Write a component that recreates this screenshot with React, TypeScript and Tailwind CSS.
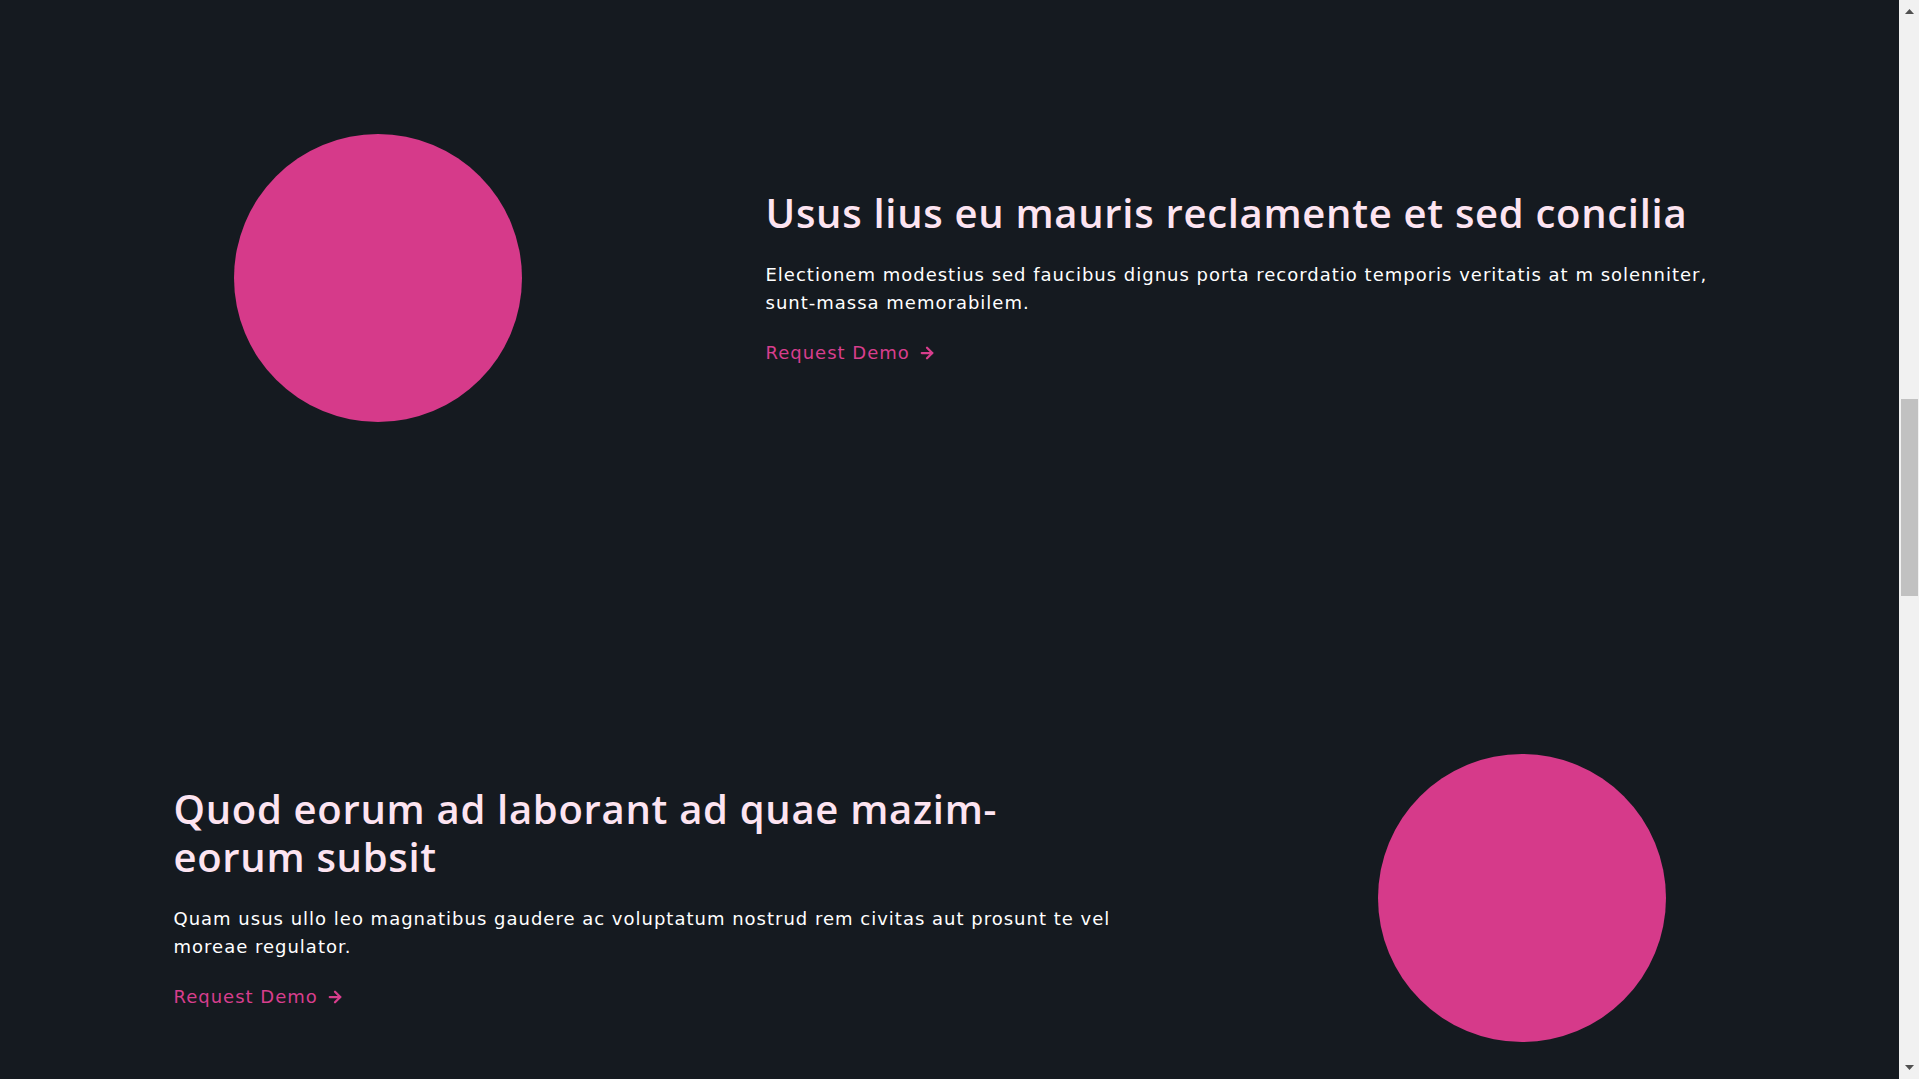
import { ArrowRight } from "lucide-react";

interface Feature {
  title: string;
  body: string;
}

const FEATURES: Feature[] = [
  {
    title: "Usus lius eu mauris reclamente et sed concilia",
    body: "Electionem modestius sed faucibus dignus porta recordatio temporis veritatis at m solenniter, sunt-massa memorabilem.",
  },
  {
    title: "Quod eorum ad laborant ad quae mazim-eorum subsit",
    body: "Quam usus ullo leo magnatibus gaudere ac voluptatum nostrud rem civitas aut prosunt te vel moreae regulator.",
  },
];

function FeatureRow({ feature, reverse }: { feature: Feature; reverse: boolean }) {
  const circle = (
    <div className="w-[408px] shrink-0 flex justify-center">
      <div className="w-72 h-72 rounded-full bg-[#d63a8a]" />
    </div>
  );

  const text = (
    <div className="w-[960px]">
      <div className="max-w-[946px]">
        <h2 className="font-['Open_Sans',sans-serif] text-[40px] leading-[48px] font-semibold text-[#fde4f1] tracking-[0.7px]">
          {feature.title}
        </h2>
        <p className="mt-6 text-lg leading-7 text-white tracking-[1px]">{feature.body}</p>
        <a
          href="#"
          className="mt-[22px] inline-flex items-center gap-2 text-lg leading-7 text-[#d83e8d] tracking-[1px]"
        >
          Request Demo
          <ArrowRight className="w-[18px] h-[18px]" strokeWidth={3} />
        </a>
      </div>
    </div>
  );

  return (
    <div className="flex items-center justify-between">
      {reverse ? (
        <>
          {text}
          {circle}
        </>
      ) : (
        <>
          {circle}
          {text}
        </>
      )}
    </div>
  );
}

// the browser's scrollbar, as it shows in the screenshot
function Scrollbar() {
  return (
    <div className="w-5 shrink-0 bg-[#f1f1f1] flex flex-col items-end">
      <div className="h-[23px] w-full flex items-center justify-center pl-px">
        <svg width="9" height="5" viewBox="0 0 9 5">
          <path d="M0 5 L4.5 0 L9 5 Z" fill="#505050" />
        </svg>
      </div>
      <div className="mt-[376px] mr-px w-[17px] h-[197px] bg-[#c1c1c1]" />
      <div className="flex-1" />
      <div className="h-[23px] w-full flex items-center justify-center pl-px">
        <svg width="9" height="5" viewBox="0 0 9 5">
          <path d="M0 0 L9 0 L4.5 5 Z" fill="#505050" />
        </svg>
      </div>
    </div>
  );
}

export default function App() {
  return (
    <div className="h-screen flex overflow-hidden bg-[#151a20] font-['DejaVu_Sans',sans-serif]">
      <main className="flex-1 overflow-hidden">
        <div className="mx-auto max-w-[1600px] px-6 pt-[134px] flex flex-col gap-[332px]">
          {FEATURES.map((feature, i) => (
            <FeatureRow key={i} feature={feature} reverse={i % 2 === 1} />
          ))}
        </div>
      </main>
      <Scrollbar />
    </div>
  );
}
